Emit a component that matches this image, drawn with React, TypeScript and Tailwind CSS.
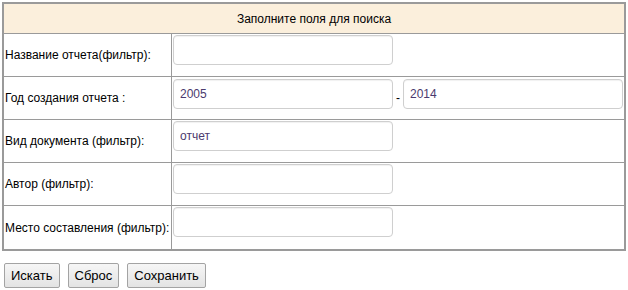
import React from "react";

const rows: { label: string; kind: "text" | "years"; value?: string }[] = [
  { label: "Название отчета(фильтр):", kind: "text" },
  { label: "Год создания отчета :", kind: "years" },
  { label: "Вид документа (фильтр):", kind: "text", value: "отчет" },
  { label: "Автор (фильтр):", kind: "text" },
  { label: "Место составления (фильтр):", kind: "text" },
];

const Field = ({ value, w }: { value?: string; w: string }) => (
  <input
    type="text"
    defaultValue={value}
    className={`${w} h-[30px] rounded-[4px] border border-[#cfcfcf] bg-white px-[6px] text-[12px] text-[#4b3a6e] shadow-[inset_0_1px_1px_rgba(0,0,0,0.06)] outline-none`}
  />
);

export default function App() {
  return (
    <div className="min-h-[290px] bg-white font-['Liberation_Sans',Arial,sans-serif] text-[12px] text-black">
      <div className="ml-[2px] pt-[2px]">
        <div className="w-[624px] border-2 border-[#9a9a9a]">
          {/* шапка */}
          <div className="flex h-[30px] items-center justify-center border-b border-[#9a9a9a] bg-[#fbefdc]">
            Заполните поля для поиска
          </div>
          {rows.map((row, i) => (
            <div
              key={row.label}
              className={`flex h-[43px] ${i < rows.length - 1 ? "border-b border-[#9a9a9a]" : "h-[42px]"}`}
            >
              <div className="flex w-[168px] items-center border-r border-[#9a9a9a] pl-[1px] whitespace-nowrap">
                {row.label}
              </div>
              <div className="flex flex-1 items-start pl-[1px] pt-[1px]">
                {row.kind === "years" ? (
                  <div className="flex items-center pt-[1px]">
                    <Field value="2005" w="w-[220px]" />
                    <span className="mx-[3px] mt-[8px]">-</span>
                    <Field value="2014" w="w-[220px]" />
                  </div>
                ) : (
                  <Field value={row.value} w="w-[220px]" />
                )}
              </div>
            </div>
          ))}
        </div>
        <div className="mt-[12px] flex gap-[8px] pl-[2px]">
          {["Искать", "Сброс", "Сохранить"].map((t) => (
            <button
              key={t}
              className="h-[25px] rounded-[2px] border border-[#a3a3a3] bg-gradient-to-b from-[#f6f6f6] to-[#e3e3e3] px-[6px] text-[13px] text-black"
            >
              {t}
            </button>
          ))}
        </div>
      </div>
    </div>
  );
}
